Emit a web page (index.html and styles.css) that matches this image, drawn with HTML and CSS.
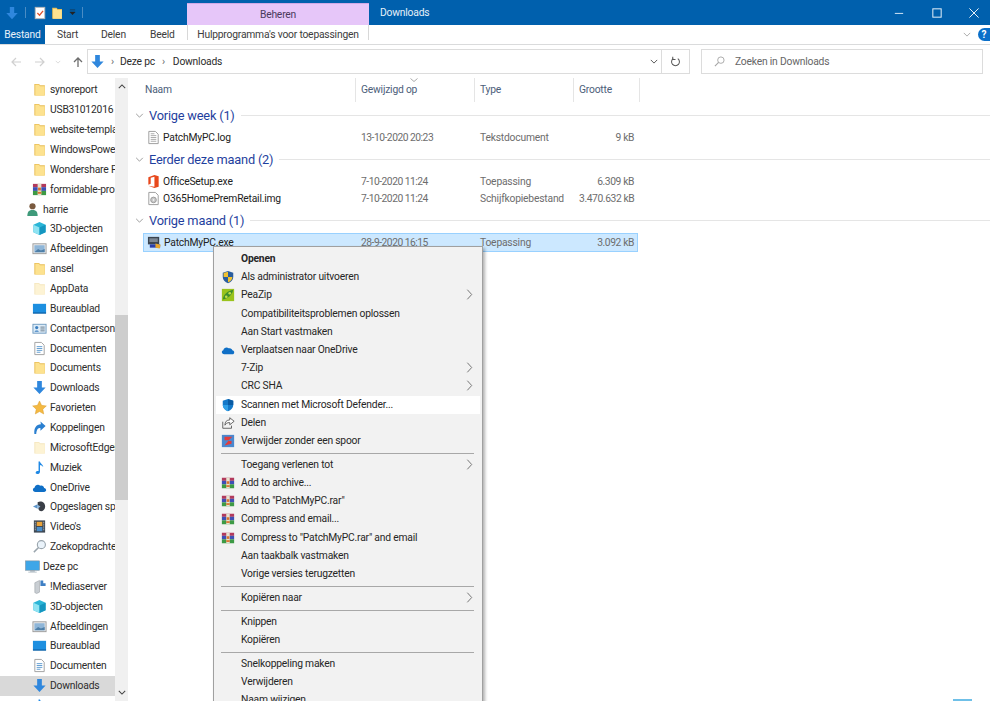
FILE: index.html
```html
<!DOCTYPE html>
<html lang="en">
<head>
    <meta charset="UTF-8">
    <meta name="viewport" content="width=device-width, initial-scale=1.0">
    <title>Downloads</title>
    <link rel="stylesheet" href="styles.css">
</head>
<body>
    <!-- shared icons -->
    <svg class="sprites" aria-hidden="true">
        <symbol id="i-folder" viewBox="0 0 16 16"><path d="M2.500 2h5l1.200 1.500h5v11h-11.200z" fill="#e8bd55"/><path d="M3.500 3h4l1 1.500h5v10h-10z" fill="#fde28f"/></symbol>
        <symbol id="i-folder-pale" viewBox="0 0 16 16"><path d="M2.500 2h5l1.200 1.500h5v11h-11.200z" fill="#f5e6bd"/><path d="M3.500 3h4l1 1.500h5v10h-10z" fill="#fdf3d4"/></symbol>
        <symbol id="i-down" viewBox="0 0 16 16"><path d="M5.500 1h5v7h4l-6.500 7-6.500-7h4z" fill="#2f87dd"/></symbol>
        <symbol id="i-rar" viewBox="0 0 16 16"><rect x="1" y="2" width="14" height="3.500" fill="#b23a5c"/><rect x="1" y="5.500" width="14" height="4" fill="#3d4fb5"/><rect x="1" y="9.500" width="14" height="4.500" fill="#3d9a45"/><rect x="6" y="2" width="4" height="12" fill="#e8e2d0"/><rect x="6.500" y="6" width="3" height="3" fill="#d9722c"/><rect x="6" y="10.500" width="4" height="2" fill="#d9722c"/></symbol>
        <symbol id="i-cube" viewBox="0 0 16 16"><path d="M8 1l6.500 3v8l-6.500 3-6.500-3v-8z" fill="#2bb5d6"/><path d="M1.500 4l6.500 3v8l-6.500-3z" fill="#8fe3f2"/><path d="M8 7l6.500-3v8l-6.500 3z" fill="#1596c0"/></symbol>
        <symbol id="i-pictures" viewBox="0 0 16 16"><rect x="1" y="3" width="14" height="10.500" fill="#f0f0f0" stroke="#9a9a9a"/><rect x="2.500" y="4.500" width="11" height="7.500" fill="#8fb6d8"/><path d="M2.500 12l4-3.500 3 1.500 4-1.500v3.500z" fill="#4e7fa8"/></symbol>
        <symbol id="i-desktop" viewBox="0 0 16 16"><rect x="1" y="3" width="14" height="10" fill="#1d8fe0"/><rect x="1" y="12.200" width="14" height="1.300" fill="#0b5fa5"/></symbol>
        <symbol id="i-contact" viewBox="0 0 16 16"><rect x="1" y="3.500" width="14" height="9.500" fill="#dcebf7" stroke="#6f9ac0"/><circle cx="5" cy="7" r="1.700" fill="#3c7fc0"/><path d="M2.700 11.500c.3-2 4.300-2 4.600 0z" fill="#3c7fc0"/><path d="M9 6.500h4.500M9 8.500h4.500M9 10.500h4.500" stroke="#6b7c8c"/></symbol>
        <symbol id="i-doc" viewBox="0 0 16 16"><path d="M3 1.500h7l3 3v10h-10z" fill="#fff" stroke="#a0a0a0"/><path d="M5 6h6M5 8h6M5 10h6M5 12h4" stroke="#5d9bd0"/></symbol>
        <symbol id="i-star" viewBox="0 0 16 16"><path d="M8 1l2.200 4.700 5.100.6-3.800 3.500 1 5.100-4.500-2.600-4.500 2.600 1-5.100-3.800-3.500 5.100-.6z" fill="#f4b942" stroke="#d99a2b" stroke-width=".5"/></symbol>
        <symbol id="i-link" viewBox="0 0 16 16"><path d="M9 1.500l5.500 5-5.500 5v-3c-2.500 0-4 1-4.500 6.500h-2c-.500-7 2-10 7-10.500z" fill="#2a7fd0"/></symbol>
        <symbol id="i-music" viewBox="0 0 16 16"><path d="M7 1.500h1.500c.3 2.500 3.500 3 3.500 6-1-1.500-2.500-2-3.500-2.200v7.200c0 1.500-1.300 2.500-2.800 2.500s-2-1-1.700-1.900c.3-1 1.700-1.600 3-1.300z" fill="#1e88e5"/></symbol>
        <symbol id="i-cloud" viewBox="0 2 15 12"><path d="M3.500 12.500c-3 0-3.500-3.500-1-4.300.500-2.700 3.700-3.700 5.700-2 2-.7 3.700.5 3.900 2.200 2.500.100 3 4.100-.100 4.100z" fill="#0f6fc6"/></symbol>
        <symbol id="i-games" viewBox="0 0 16 16"><path d="M1 8l5-2.500v5z" fill="#5b93c9"/><path d="M6 3.500c4-2 8 .5 8 4.500s-3.500 6-6 4.500c-1.500-1-2-7-2-9z" fill="#3a3f47"/><path d="M6 6l3 2-3 2.500z" fill="#8db7dd"/></symbol>
        <symbol id="i-video" viewBox="0 0 16 16"><rect x="2" y="1.500" width="12" height="13" fill="#3d4752"/><rect x="5" y="3" width="6" height="4.500" fill="#e8a33b"/><rect x="5" y="8.500" width="6" height="4.500" fill="#4b8ec9"/><path d="M3.500 3v10M12.500 3v10" stroke="#cfd4da" stroke-dasharray="1 1"/></symbol>
        <symbol id="i-search" viewBox="0 0 16 16"><circle cx="10" cy="6" r="4.300" fill="#eaf3fa" stroke="#9aa5ad" stroke-width="1.200"/><path d="M7 9l-5 5" stroke="#9aa5ad" stroke-width="1.600"/></symbol>
        <symbol id="i-user" viewBox="0 0 16 16"><circle cx="8" cy="4.500" r="3.300" fill="#7a5a3f"/><path d="M2.500 15c0-5 2-6.500 5.500-6.500s5.500 1.500 5.500 6.500z" fill="#3f9a7a"/></symbol>
        <symbol id="i-pc" viewBox="0 0 16 16"><rect x=".500" y="2" width="15" height="10" fill="#3ea6e8" stroke="#7f8f9c" stroke-width=".6"/><rect x="5.500" y="12" width="5" height="1.500" fill="#9aa7b1"/><rect x="3.500" y="13.500" width="9" height="1" fill="#b5bfc7"/></symbol>
        <symbol id="i-server" viewBox="0 0 16 16"><path d="M3 4l5-2.500v12.500l-3 1.500-2-1z" fill="#c9ced3" stroke="#8a9096" stroke-width=".5"/><path d="M9 1.500h3v3h2.500v3h-5.500z" fill="#3e7fc4"/></symbol>
        <symbol id="i-uac" viewBox="0 0 16 16"><path d="M8 1l6 2v5c0 3.500-2.500 5.800-6 7-3.500-1.200-6-3.500-6-7v-5z" fill="#2b5e9e"/><path d="M8 2v6h5c0 3-2 5-5 6v-6h-5v-4.500z" fill="#f2c230"/></symbol>
        <symbol id="i-peazip" viewBox="0 0 16 16"><rect x="1" y="1" width="14" height="14" fill="#9ac31c"/><path d="M2 13c1-6 6-10 12-11-1 6-6 10-12 11z" fill="#3f8f2b"/><circle cx="6" cy="10" r="1.500" fill="#c3df4a"/><circle cx="10" cy="6" r="1.500" fill="#c3df4a"/></symbol>
        <symbol id="i-defender" viewBox="0 0 16 16"><path d="M8 1l6 2.200v4.800c0 3.500-2.500 5.800-6 7-3.500-1.200-6-3.500-6-7v-4.800z" fill="#1479c9"/><path d="M8 1l6 2.200v4.800h-6z" fill="#0a5ba3"/><path d="M2 8h6v7c-3.500-1.200-6-3.500-6-7z" fill="#31a1e8"/></symbol>
        <symbol id="i-share" viewBox="0 0 16 16"><path d="M2 6.500v7.500h10v-3" fill="none" stroke="#555"/><path d="M10 2l5 4-5 4v-2.500c-3 0-4.500 1-5.500 3 0-4 2-6 5.500-6z" fill="#fff" stroke="#555"/></symbol>
        <symbol id="i-zap" viewBox="0 0 16 16"><rect x="1" y="1" width="14" height="14" fill="#4a88cf"/><path d="M4 3h9l-5 5h4v3l-8 2 5-6h-5z" fill="#e23c3c"/></symbol>
        <symbol id="i-office" viewBox="0 0 16 16"><path d="M2.500 3.500l6.500-2.500 4.500 1.500v11l-4.500 1.500-6.500-2.500 6.500 1v-10.500l-4 1v6.500l-2.500 1z" fill="#e8481c"/></symbol>
        <symbol id="i-log" viewBox="0 0 16 16"><path d="M3 1.500h7l3 3v10h-10z" fill="#fff" stroke="#9a9a9a"/><path d="M5 4h4M5 6h6M5 8h6M5 10h6M5 12h6" stroke="#a8a8a8"/></symbol>
        <symbol id="i-img" viewBox="0 0 16 16"><path d="M3 1.500h7l3 3v10h-10z" fill="#fff" stroke="#9a9a9a"/><circle cx="8" cy="9.500" r="3" fill="#c8c8c8" stroke="#999"/><circle cx="8" cy="9.500" r=".8" fill="#fff"/></symbol>
        <symbol id="i-app" viewBox="0 0 16 16"><rect x="1" y="2" width="12" height="8" fill="#3a4450"/><rect x="2.500" y="3.500" width="9" height="4" fill="#7c8794"/><rect x="3" y="10" width="11" height="3.500" fill="#2a3faa"/><path d="M9 9l5.500 1.500-1 4-4.500-1z" fill="#e8a62c"/></symbol>
        <symbol id="i-note" viewBox="0 0 16 16"><rect x="2.500" y="1.500" width="11" height="13" fill="#fff" stroke="#b5b5b5"/><path d="M5 8l2.500 2.500 4-5" fill="none" stroke="#e0532f" stroke-width="1.500"/></symbol>
        <symbol id="i-chev" viewBox="0 0 8 14"><path d="M1.500 1.500l5 5.500-5 5.500" fill="none" stroke="#666" stroke-width="1"/></symbol>
    </svg>

    <div class="window">
        <header class="titlebar">
            <div class="quick">
                <svg class="ico-sm"><use href="#i-down"/></svg>
                <span class="quick-sep"></span>
                <svg class="ico-sm"><use href="#i-note"/></svg>
                <svg class="ico-sm"><use href="#i-folder"/></svg>
                <svg class="quick-drop" viewBox="0 0 8 8"><path d="M1 1h6M1 3.500h6l-3 3z" fill="#222" stroke="#222" stroke-width=".6"/></svg>
                <span class="quick-sep"></span>
            </div>
            <div class="context-tab">Beheren</div>
            <div class="title">Downloads</div>
            <div class="win-buttons">
                <svg viewBox="0 0 12 12"><path d="M1 6.500h10" stroke="#cfe3f5" stroke-width="1.200"/></svg>
                <svg viewBox="0 0 12 12"><rect x="1" y="1" width="10" height="10" fill="none" stroke="#e4f0fa" stroke-width="1.200"/></svg>
                <svg viewBox="0 0 12 12"><path d="M.5 .5l11 11M11.500 .5l-11 11" stroke="#fff" stroke-width="1.100"/></svg>
            </div>
        </header>

        <nav class="ribbon">
            <div class="tab tab-file">Bestand</div>
            <div class="tab tab-start">Start</div>
            <div class="tab tab-share">Delen</div>
            <div class="tab tab-view">Beeld</div>
            <div class="tab tab-tools">Hulpprogramma's voor toepassingen</div>
            <div class="ribbon-right">
                <svg class="ribbon-chev" viewBox="0 0 10 6"><path d="M1 1l4 4 4-4" fill="none" stroke="#9a9a9a"/></svg>
                <span class="help">?</span>
            </div>
        </nav>

        <div class="addressbar">
            <div class="nav-arrows">
                <svg viewBox="0 0 12 12"><path d="M11 6h-9M6 2l-4 4 4 4" fill="none" stroke="#d0d0d0" stroke-width="1.200"/></svg>
                <svg viewBox="0 0 12 12"><path d="M1 6h9M6 2l4 4-4 4" fill="none" stroke="#d0d0d0" stroke-width="1.200"/></svg>
                <svg class="nav-drop" viewBox="0 0 8 5"><path d="M1 1l3 3 3-3" fill="none" stroke="#d0d0d0"/></svg>
                <svg viewBox="0 0 12 12"><path d="M6 11v-9M2 6l4-4 4 4" fill="none" stroke="#6d6d6d" stroke-width="1.300"/></svg>
            </div>
            <div class="path">
                <svg class="path-icon"><use href="#i-down"/></svg>
                <span class="crumb-sep">&rsaquo;</span>
                <span>Deze pc</span>
                <span class="crumb-sep crumb-last">&rsaquo;</span>
                <span>Downloads</span>
                <span class="path-drop">
                    <svg viewBox="0 0 10 6"><path d="M1 1l4 4 4-4" fill="none" stroke="#555" stroke-width="1.200"/></svg>
                </span>
                <span class="path-refresh">
                    <svg viewBox="0 0 12 12"><path d="M3.500 2.800a4.300 4.300 0 1 0 5 0" fill="none" stroke="#555" stroke-width="1.100"/><path d="M3 .8v3h3" fill="none" stroke="#555" stroke-width="1.100"/></svg>
                </span>
            </div>
            <div class="searchbox">
                <svg viewBox="0 0 12 12"><circle cx="7.500" cy="4.500" r="3.500" fill="none" stroke="#a5a5a5"/><path d="M5 7l-4 4" stroke="#a5a5a5" stroke-width="1.200"/></svg>
                <span>Zoeken in Downloads</span>
            </div>
        </div>

        <div class="content">
            <aside class="sidebar">
                <div class="nav-item"><svg><use href="#i-folder"/></svg>synoreport</div>
                <div class="nav-item"><svg><use href="#i-folder"/></svg>USB31012016</div>
                <div class="nav-item"><svg><use href="#i-folder"/></svg>website-templates</div>
                <div class="nav-item"><svg><use href="#i-folder"/></svg>WindowsPowerShell</div>
                <div class="nav-item"><svg><use href="#i-folder"/></svg>Wondershare Filmora</div>
                <div class="nav-item"><svg><use href="#i-rar"/></svg>formidable-pro</div>
                <div class="nav-item nav-top"><svg><use href="#i-user"/></svg>harrie</div>
                <div class="nav-item"><svg><use href="#i-cube"/></svg>3D-objecten</div>
                <div class="nav-item"><svg><use href="#i-pictures"/></svg>Afbeeldingen</div>
                <div class="nav-item"><svg><use href="#i-folder"/></svg>ansel</div>
                <div class="nav-item"><svg><use href="#i-folder-pale"/></svg>AppData</div>
                <div class="nav-item"><svg><use href="#i-desktop"/></svg>Bureaublad</div>
                <div class="nav-item"><svg><use href="#i-contact"/></svg>Contactpersonen</div>
                <div class="nav-item"><svg><use href="#i-doc"/></svg>Documenten</div>
                <div class="nav-item"><svg><use href="#i-folder"/></svg>Documents</div>
                <div class="nav-item"><svg><use href="#i-down"/></svg>Downloads</div>
                <div class="nav-item"><svg><use href="#i-star"/></svg>Favorieten</div>
                <div class="nav-item"><svg><use href="#i-link"/></svg>Koppelingen</div>
                <div class="nav-item"><svg><use href="#i-folder-pale"/></svg>MicrosoftEdgeBackups</div>
                <div class="nav-item"><svg><use href="#i-music"/></svg>Muziek</div>
                <div class="nav-item"><svg><use href="#i-cloud"/></svg>OneDrive</div>
                <div class="nav-item"><svg><use href="#i-games"/></svg>Opgeslagen spellen</div>
                <div class="nav-item"><svg><use href="#i-video"/></svg>Video's</div>
                <div class="nav-item"><svg><use href="#i-search"/></svg>Zoekopdrachten</div>
                <div class="nav-item nav-top"><svg><use href="#i-pc"/></svg>Deze pc</div>
                <div class="nav-item"><svg><use href="#i-server"/></svg>!Mediaserver</div>
                <div class="nav-item"><svg><use href="#i-cube"/></svg>3D-objecten</div>
                <div class="nav-item"><svg><use href="#i-pictures"/></svg>Afbeeldingen</div>
                <div class="nav-item"><svg><use href="#i-desktop"/></svg>Bureaublad</div>
                <div class="nav-item"><svg><use href="#i-doc"/></svg>Documenten</div>
                <div class="nav-item nav-selected"><svg><use href="#i-down"/></svg>Downloads</div>
                <div class="nav-item"><svg><use href="#i-music"/></svg>Muziek</div>
            </aside>

            <div class="scrollbar">
                <svg class="scroll-arrow" viewBox="0 0 10 6"><path d="M1 5l4-4 4 4" fill="none" stroke="#444" stroke-width="1.300"/></svg>
                <div class="scroll-track"><div class="scroll-thumb"></div></div>
                <svg class="scroll-arrow" viewBox="0 0 10 6"><path d="M1 1l4 4 4-4" fill="none" stroke="#444" stroke-width="1.300"/></svg>
            </div>

            <main class="files">
                <div class="columns">
                    <div class="col col-name">Naam</div>
                    <div class="col col-date">Gewijzigd op
                        <svg class="sort-mark" viewBox="0 0 8 4"><path d="M.5 .5l3.500 3 3.500-3" fill="none" stroke="#aaa"/></svg>
                    </div>
                    <div class="col col-type">Type</div>
                    <div class="col col-size">Grootte</div>
                </div>

                <section class="group">
                    <h2 class="group-head"><svg viewBox="0 0 10 6"><path d="M1 1l4 4 4-4" fill="none" stroke="#8a8a8a"/></svg>Vorige week (1)</h2>
                    <div class="file-row">
                        <span class="file-name"><svg><use href="#i-log"/></svg>PatchMyPC.log</span>
                        <span class="file-date">13-10-2020 20:23</span>
                        <span class="file-type">Tekstdocument</span>
                        <span class="file-size">9 kB</span>
                    </div>
                </section>

                <section class="group">
                    <h2 class="group-head"><svg viewBox="0 0 10 6"><path d="M1 1l4 4 4-4" fill="none" stroke="#8a8a8a"/></svg>Eerder deze maand (2)</h2>
                    <div class="file-row">
                        <span class="file-name"><svg><use href="#i-office"/></svg>OfficeSetup.exe</span>
                        <span class="file-date">7-10-2020 11:24</span>
                        <span class="file-type">Toepassing</span>
                        <span class="file-size">6.309 kB</span>
                    </div>
                    <div class="file-row">
                        <span class="file-name"><svg><use href="#i-img"/></svg>O365HomePremRetail.img</span>
                        <span class="file-date">7-10-2020 11:24</span>
                        <span class="file-type">Schijfkopiebestand</span>
                        <span class="file-size">3.470.632 kB</span>
                    </div>
                </section>

                <section class="group">
                    <h2 class="group-head"><svg viewBox="0 0 10 6"><path d="M1 1l4 4 4-4" fill="none" stroke="#8a8a8a"/></svg>Vorige maand (1)</h2>
                    <div class="file-row file-selected">
                        <span class="file-name"><svg><use href="#i-app"/></svg>PatchMyPC.exe</span>
                        <span class="file-date">28-9-2020 16:15</span>
                        <span class="file-type">Toepassing</span>
                        <span class="file-size">3.092 kB</span>
                    </div>
                </section>
            </main>
        </div>

        <!-- right click menu -->
        <div class="menu">
            <div class="menu-item menu-default"><span>Openen</span></div>
            <div class="menu-item"><svg><use href="#i-uac"/></svg><span>Als administrator uitvoeren</span></div>
            <div class="menu-item"><svg><use href="#i-peazip"/></svg><span>PeaZip</span><svg class="more"><use href="#i-chev"/></svg></div>
            <div class="menu-item"><span>Compatibiliteitsproblemen oplossen</span></div>
            <div class="menu-item"><span>Aan Start vastmaken</span></div>
            <div class="menu-item"><svg><use href="#i-cloud"/></svg><span>Verplaatsen naar OneDrive</span></div>
            <div class="menu-item"><span>7-Zip</span><svg class="more"><use href="#i-chev"/></svg></div>
            <div class="menu-item"><span>CRC SHA</span><svg class="more"><use href="#i-chev"/></svg></div>
            <div class="menu-item menu-hover"><svg><use href="#i-defender"/></svg><span>Scannen met Microsoft Defender...</span></div>
            <div class="menu-item"><svg><use href="#i-share"/></svg><span>Delen</span></div>
            <div class="menu-item"><svg><use href="#i-zap"/></svg><span>Verwijder zonder een spoor</span></div>
            <div class="menu-sep"></div>
            <div class="menu-item"><span>Toegang verlenen tot</span><svg class="more"><use href="#i-chev"/></svg></div>
            <div class="menu-item"><svg><use href="#i-rar"/></svg><span>Add to archive...</span></div>
            <div class="menu-item"><svg><use href="#i-rar"/></svg><span>Add to "PatchMyPC.rar"</span></div>
            <div class="menu-item"><svg><use href="#i-rar"/></svg><span>Compress and email...</span></div>
            <div class="menu-item"><svg><use href="#i-rar"/></svg><span>Compress to "PatchMyPC.rar" and email</span></div>
            <div class="menu-item"><span>Aan taakbalk vastmaken</span></div>
            <div class="menu-item"><span>Vorige versies terugzetten</span></div>
            <div class="menu-sep"></div>
            <div class="menu-item"><span>Kopiëren naar</span><svg class="more"><use href="#i-chev"/></svg></div>
            <div class="menu-sep"></div>
            <div class="menu-item"><span>Knippen</span></div>
            <div class="menu-item"><span>Kopiëren</span></div>
            <div class="menu-sep"></div>
            <div class="menu-item"><span>Snelkoppeling maken</span></div>
            <div class="menu-item"><span>Verwijderen</span></div>
            <div class="menu-item"><span>Naam wijzigen</span></div>
        </div>

        <div class="corner-strip"></div>
    </div>
</body>
</html>
```

FILE: styles.css
```css
* {
    box-sizing: border-box;
}

body {
    font-family: Roboto, "Open Sans", sans-serif;
    font-size: 10.3px;
    letter-spacing: -0.2px;
    color: #2b2b2b;
    background-color: #fff;
    margin: 0;
    overflow: hidden;
}

.sprites {
    position: absolute;
    width: 0;
    height: 0;
}

.window {
    position: relative;
    width: 990px;
    height: 701px;
    overflow: hidden;
}

/* title bar */
.titlebar {
    display: flex;
    height: 25px;
    background-color: #0060ad;
}

.quick {
    display: flex;
    align-items: center;
    width: 187px;
    padding-left: 5px;
}

.ico-sm {
    width: 14px;
    height: 14px;
    margin-right: 3px;
}

.quick-sep {
    width: 1px;
    height: 11px;
    background-color: #4a8cc4;
    margin: 0 7px 0 3px;
}

.quick-drop {
    width: 7px;
    height: 7px;
    margin: 0 3px 0 2px;
}

.context-tab {
    width: 182px;
    margin-top: 3px;
    padding-top: 4px;
    text-align: center;
    color: #4b3a5c;
    background-color: #e6c6f9;
    border-top: 1px solid #cfa9e6;
}

.title {
    padding: 6px 0 0 11px;
    color: #e6f0f8;
}

.win-buttons {
    display: flex;
    align-items: center;
    gap: 27.5px;
    margin-left: auto;
    padding-right: 11px;
}

.win-buttons svg {
    width: 10px;
    height: 10px;
}

/* ribbon */
.ribbon {
    display: flex;
    height: 20px;
    background-color: #fff;
    border-bottom: 1px solid #dadbdc;
}

.tab {
    line-height: 19px;
    color: #3c3c3c;
}

.tab-file {
    width: 45px;
    text-align: center;
    color: #eaf2f9;
    background-color: #0060ad;
}

.tab-start {
    margin-left: 12px;
    width: 44px;
}

.tab-share {
    width: 49px;
}

.tab-view {
    width: 37px;
}

.tab-tools {
    width: 182px;
    height: 15px;
    text-align: center;
    white-space: nowrap;
    border-left: 1px solid #d8d8d8;
    border-right: 1px solid #d8d8d8;
}

.ribbon-right {
    display: flex;
    align-items: center;
    gap: 7px;
    margin-left: auto;
}

.ribbon-chev {
    width: 8px;
    height: 5px;
}

.help {
    width: 12px;
    height: 13px;
    line-height: 13px;
    border-radius: 7px 0 0 7px;
    font-weight: 700;
    font-size: 10px;
    text-align: center;
    color: #fff;
    background-color: #0a6fc9;
}

/* address row */
.addressbar {
    display: flex;
    align-items: center;
    height: 33px;
}

.nav-arrows {
    display: flex;
    align-items: center;
    width: 87px;
    padding-left: 10px;
    gap: 12px;
}

.nav-arrows svg {
    width: 12px;
    height: 12px;
}

.nav-arrows .nav-drop {
    width: 6px;
    height: 4px;
    margin: 0 -1px 0 -3px;
}

.path {
    display: flex;
    align-items: center;
    gap: 6px;
    width: 603px;
    height: 25px;
    padding-left: 2px;
    color: #2b2b2b;
    border: 1px solid #dcdcdc;
}

.path-icon {
    width: 15px;
    height: 15px;
}

.crumb-sep {
    color: #666;
}

.crumb-last {
    margin: 0 2px 0 1px;
}

.path-drop {
    display: flex;
    margin-left: auto;
    margin-right: -3px;
}

.path-drop svg {
    width: 8px;
    height: 5px;
}

.path-refresh {
    display: flex;
    align-items: center;
    justify-content: center;
    width: 28px;
    height: 100%;
    border-left: 1px solid #dcdcdc;
}

.path-refresh svg {
    width: 11px;
    height: 11px;
}

.searchbox {
    display: flex;
    align-items: center;
    gap: 10px;
    width: 282px;
    height: 25px;
    margin-left: 11px;
    padding-left: 12px;
    color: #666;
    border: 1px solid #dcdcdc;
}

.searchbox svg {
    width: 11px;
    height: 11px;
}

/* navigation pane */
.content {
    display: flex;
    height: 623px;
}

.sidebar {
    width: 115px;
    flex-shrink: 0;
    overflow: hidden;
    padding-top: 2px;
}

.nav-item {
    display: flex;
    align-items: center;
    height: 19.87px;
    padding-left: 32px;
    white-space: nowrap;
    overflow: hidden;
    color: #2d2d2d;
}

.nav-item svg {
    width: 15px;
    height: 15px;
    flex-shrink: 0;
    margin-right: 3px;
}

.nav-top {
    padding-left: 25px;
}

.nav-selected {
    background-color: #d9d9d9;
}

.scrollbar {
    display: flex;
    flex-direction: column;
    align-items: center;
    width: 13px;
    flex-shrink: 0;
    background-color: #f0f0f0;
}

.scroll-arrow {
    width: 8px;
    height: 5px;
    margin: 6px 0;
    flex-shrink: 0;
}

.scroll-track {
    flex: 1;
    width: 100%;
    padding-top: 220px;
}

.scroll-thumb {
    height: 185px;
    background-color: #cdcdcd;
}

/* file list */
.files {
    flex: 1;
    padding-left: 15px;
}

.columns {
    position: relative;
    display: grid;
    grid-template-columns: 213px 119px 99px 66px;
    height: 24px;
    margin-left: -15px;
    padding-left: 15px;
    color: #4c607a;
}

.col {
    position: relative;
    padding-left: 2px;
    line-height: 24px;
    border-right: 1px solid #e5e5e5;
}

.col-date,
.col-type,
.col-size {
    padding-left: 5px;
}

.sort-mark {
    position: absolute;
    top: 0;
    left: 54px;
    width: 8px;
    height: 4px;
}

.group-head {
    display: flex;
    align-items: center;
    height: 22px;
    margin: 2px 0 3px -8px;
    font-size: 12.8px;
    font-weight: 400;
    color: #1f3f9e;
}

.group-head svg {
    width: 9px;
    height: 5px;
    margin-right: 5px;
    flex-shrink: 0;
}

.group-head::after {
    content: "";
    flex: 1;
    height: 1px;
    margin-left: 6px;
    background-color: #e5e5e5;
}

.file-row {
    display: grid;
    grid-template-columns: 218px 119px 99px minmax(0, 1fr);
    align-items: center;
    width: 495px;
    height: 17px;
    padding-right: 4px;
    white-space: nowrap;
    color: #6d6d6d;
}

.file-name {
    display: flex;
    align-items: center;
    color: #222;
    padding-left: 3px;
}

.file-name svg {
    width: 15px;
    height: 15px;
    margin-right: 2px;
}

.file-date {
    letter-spacing: -0.5px;
}

.file-size {
    text-align: right;
    letter-spacing: -0.4px;
}

.file-selected {
    height: 19px;
    grid-template-columns: 217px 119px 99px minmax(0, 1fr);
    margin-top: -1px;
    padding-right: 3px;
    padding-bottom: 1px;
    background-color: #cce8ff;
    border: 1px solid #99d1ff;
}

/* context menu */
.menu {
    position: absolute;
    top: 246px;
    left: 213px;
    width: 270px;
    height: 470px;
    padding: 3px 2px;
    background-color: #f2f2f2;
    border: 1px solid #a0a0a0;
    box-shadow: 2px 2px 3px rgba(0, 0, 0, 0.3);
}

.menu-item {
    position: relative;
    height: 18.2px;
    line-height: 18.2px;
    padding-left: 25px;
    color: #262626;
    white-space: nowrap;
}

.menu-item svg {
    position: absolute;
    top: 2px;
    left: 5px;
    width: 14px;
    height: 14px;
}

.menu-item .more {
    left: auto;
    right: 7px;
    width: 7px;
    height: 13px;
}

.menu-default {
    font-weight: 700;
}

.menu-hover {
    background-color: #fff;
}

.menu-sep {
    height: 1px;
    margin: 3px 6px 1.7px 5px;
    background-color: #a8a8a8;
}

.corner-strip {
    position: absolute;
    top: 699px;
    left: 953px;
    width: 19px;
    height: 2px;
    background-color: #6fc0e8;
}
```
